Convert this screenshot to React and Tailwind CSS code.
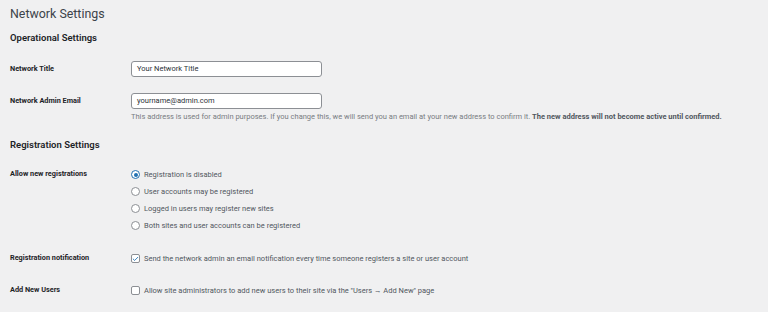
import { Check } from "lucide-react";

const radios = [
  { label: "Registration is disabled", on: true },
  { label: "User accounts may be registered" },
  { label: "Logged in users may register new sites" },
  { label: "Both sites and user accounts can be registered" },
];

function Radio({ on }) {
  return (
    <span
      className={`w-[9px] h-[9px] rounded-full border bg-white flex items-center justify-center shrink-0 ${
        on ? "border-[#2271b1]" : "border-[#8c8f94]"
      }`}
    >
      {on && <span className="w-[4px] h-[4px] rounded-full bg-[#2271b1]" />}
    </span>
  );
}

function Checkbox({ on }) {
  return (
    <span className="w-[9px] h-[9px] rounded-[2px] border border-[#8c8f94] bg-white flex items-center justify-center shrink-0">
      {on && <Check size={8} strokeWidth={3} className="text-[#2271b1]" />}
    </span>
  );
}

function Label({ children }) {
  return <div className="w-[121px] shrink-0 font-bold text-[#1d2327] text-[7.3px]">{children}</div>;
}

export default function App() {
  return (
    <div className="w-[768px] h-[312px] overflow-hidden bg-[#f0f0f1] pl-[10px] font-['Roboto',sans-serif] text-[#50575e] text-[7.5px]">
      {/* Page title */}
      <h1 className="h-[28px] leading-[28px] text-[12.4px] text-[#3c434a]">Network Settings</h1>
      <h2 className="h-[20px] leading-[20px] text-[9.5px] font-semibold text-[#1d2327]">Operational Settings</h2>

      <div className="mt-[13px] flex items-center h-[16px]">
        <Label>Network Title</Label>
        <div className="w-[191px] h-[16px] bg-white border border-[#8c8f94] rounded-[3px] px-[5px] flex items-center text-[#2c3338]">
          Your Network Title
        </div>
      </div>

      <div className="mt-[16px] flex items-center h-[16px]">
        <Label>Network Admin Email</Label>
        <div className="w-[191px] h-[16px] bg-white border border-[#8c8f94] rounded-[3px] px-[5px] flex items-center text-[#2c3338]">
          yourname@admin.com
        </div>
      </div>
      <p className="mt-[2px] ml-[121px] h-[12px] leading-[12px] text-[#787c82] whitespace-nowrap">
        This address is used for admin purposes. If you change this, we will send you an email at your new address to confirm it.{" "}
        <strong className="font-bold text-[#50575e]">The new address will not become active until confirmed.</strong>
      </p>

      <h2 className="mt-[12px] h-[20px] leading-[20px] text-[9.5px] font-semibold text-[#1d2327]">Registration Settings</h2>

      {/* Allow new registrations */}
      <div className="mt-[11px] flex">
        <div className="h-[17px] flex items-center">
          <Label>Allow new registrations</Label>
        </div>
        <div className="flex flex-col">
          {radios.map((r) => (
            <div key={r.label} className="h-[17px] flex items-center gap-[4px]">
              <Radio on={r.on} />
              <span>{r.label}</span>
            </div>
          ))}
        </div>
      </div>

      <div className="mt-[16px] h-[17px] flex items-center">
        <Label>Registration notification</Label>
        <div className="flex items-center gap-[4px]">
          <Checkbox on />
          <span>Send the network admin an email notification every time someone registers a site or user account</span>
        </div>
      </div>

      <div className="mt-[15px] h-[17px] flex items-center">
        <Label>Add New Users</Label>
        <div className="flex items-center gap-[4px]">
          <Checkbox />
          <span>Allow site administrators to add new users to their site via the "Users → Add New" page</span>
        </div>
      </div>
    </div>
  );
}
